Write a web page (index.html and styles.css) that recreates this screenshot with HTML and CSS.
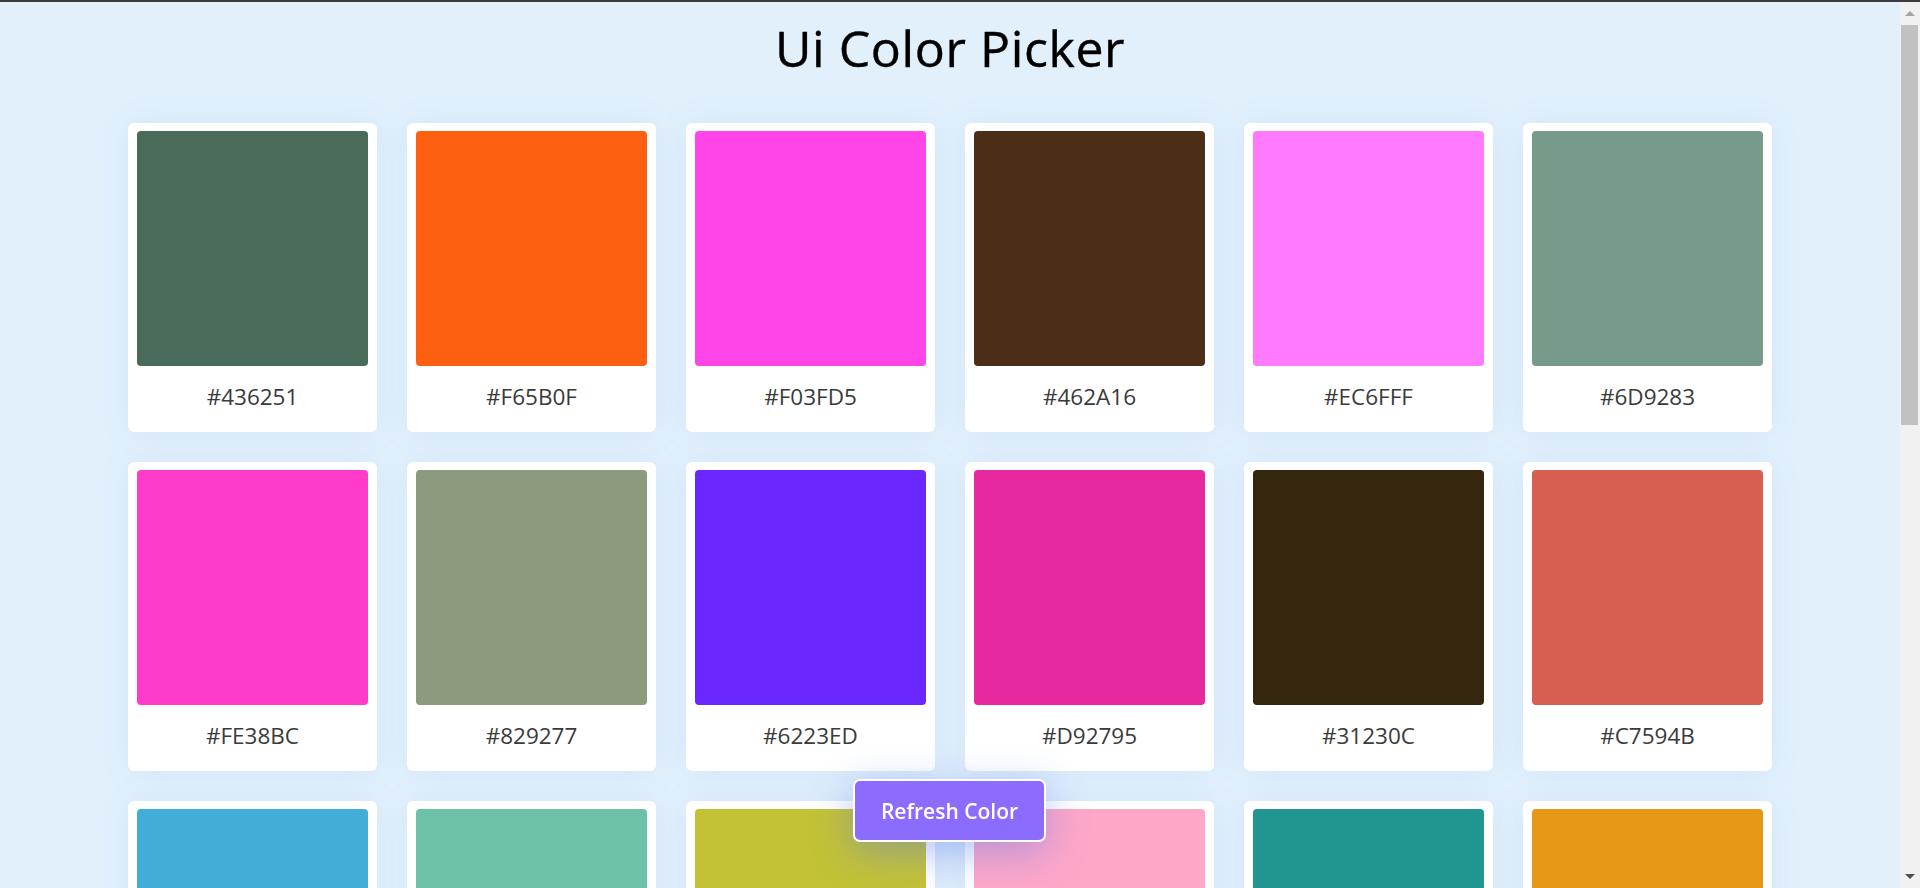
FILE: index.html
```html
<!DOCTYPE html>
<html lang="en">
<head>
<meta charset="utf-8">
<title>Ui Color Picker</title>
<link rel="stylesheet" href="styles.css">
</head>
<body>
<div class="window">
  <main class="page">
    <h1 class="title">Ui Color Picker</h1>
    <ul class="palette">
      <li class="card"><div class="swatch" style="background:#4a6a5a"></div><span class="hex">#436251</span></li>
      <li class="card"><div class="swatch" style="background:#ff5f11"></div><span class="hex">#F65B0F</span></li>
      <li class="card"><div class="swatch" style="background:#ff45e8"></div><span class="hex">#F03FD5</span></li>
      <li class="card"><div class="swatch" style="background:#4c2d18"></div><span class="hex">#462A16</span></li>
      <li class="card"><div class="swatch" style="background:#ff7aff"></div><span class="hex">#EC6FFF</span></li>
      <li class="card"><div class="swatch" style="background:#779b8b"></div><span class="hex">#6D9283</span></li>
      <li class="card"><div class="swatch" style="background:#ff3bc9"></div><span class="hex">#FE38BC</span></li>
      <li class="card"><div class="swatch" style="background:#8c9a7e"></div><span class="hex">#829277</span></li>
      <li class="card"><div class="swatch" style="background:#6b27ff"></div><span class="hex">#6223ED</span></li>
      <li class="card"><div class="swatch" style="background:#e8289e"></div><span class="hex">#D92795</span></li>
      <li class="card"><div class="swatch" style="background:#35260e"></div><span class="hex">#31230C</span></li>
      <li class="card"><div class="swatch" style="background:#d65f52"></div><span class="hex">#C7594B</span></li>
      <li class="card"><div class="swatch" style="background:#42aed8"></div><span class="hex">#3DA2CA</span></li>
      <li class="card"><div class="swatch" style="background:#6ec1a9"></div><span class="hex">#66B39D</span></li>
      <li class="card"><div class="swatch" style="background:#c3c236"></div><span class="hex">#B5B432</span></li>
      <li class="card"><div class="swatch" style="background:#fea7c9"></div><span class="hex">#EC9BBB</span></li>
      <li class="card"><div class="swatch" style="background:#219690"></div><span class="hex">#1F8B86</span></li>
      <li class="card"><div class="swatch" style="background:#e59815"></div><span class="hex">#D58D14</span></li>
    </ul>
    <button class="refresh" type="button">Refresh Color</button>
  </main>
  <div class="scrollbar" aria-hidden="true">
    <span class="arrow arrow-up"></span>
    <div class="track"><div class="thumb"></div></div>
    <span class="arrow arrow-down"></span>
  </div>
</div>
</body>
</html>
```

FILE: styles.css
```css
* { box-sizing: border-box; }

html, body {
  margin: 0;
  height: 100%;
  overflow: hidden;
}

body {
  background: #e2f0fc;
  border-top: 2px solid #3b3c40;
  font-family: "Open Sans", "Noto Sans", sans-serif;
}

.window {
  display: flex;
  height: 886px;
}

.page {
  flex: 1;
  min-width: 0;
  overflow: hidden;
  position: relative;
}

.title {
  margin: 0;
  padding-top: 13px;
  text-align: center;
  font-size: 50px;
  font-weight: 400;
  line-height: 66px;
  color: #000;
  letter-spacing: 0.6px;
  -webkit-text-stroke: 0.4px #000;
}

.palette {
  list-style: none;
  margin: 42px auto 0;
  padding: 0;
  width: 1644px;
  display: grid;
  grid-template-columns: repeat(6, 249px);
  column-gap: 30px;
  row-gap: 30px;
}

.card {
  background: #fff;
  border-radius: 6px;
  padding: 8px 9px 9px;
  display: flex;
  flex-direction: column;
  box-shadow: 0 0 30px rgba(60, 140, 230, 0.10);
}

.swatch {
  height: 235px;
  border-radius: 4px;
}

.hex {
  display: block;
  padding: 16px 0 11px;
  line-height: 30px;
  text-align: center;
  font-size: 22.5px;
  color: #3a3a3a;
}

.refresh {
  position: fixed;
  left: 853px;
  top: 779px;
  width: 193px;
  height: 63px;
  padding: 0;
  background: #8c6cff;
  color: #fff;
  border: 2px solid #fff;
  border-radius: 7px;
  font-family: "Open Sans", "Noto Sans", sans-serif;
  font-size: 21px;
  font-weight: 600;
  box-shadow: 0 10px 40px rgba(90, 120, 230, 0.45);
  cursor: pointer;
}

.scrollbar {
  width: 20px;
  flex: none;
  background: #f1f1f1;
  display: flex;
  flex-direction: column;
  align-items: center;
}

.arrow {
  flex: none;
  width: 0;
  height: 0;
  border-left: 5px solid transparent;
  border-right: 5px solid transparent;
  margin: 9px 0;
}

.arrow-up { border-bottom: 5px solid #a3a3a3; }
.arrow-down { border-top: 5px solid #505050; }

.track {
  flex: 1;
  width: 100%;
  padding: 0 2px 0 1px;
}

.thumb {
  height: 400px;
  background: #c1c1c1;
}
```
